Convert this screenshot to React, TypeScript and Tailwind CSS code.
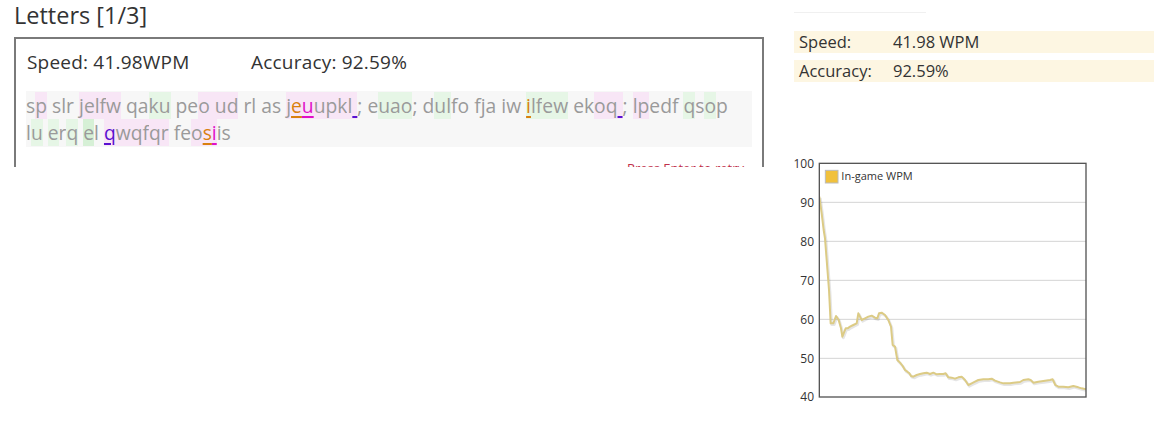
import React from "react";

type Seg = { ch: string; bg: string; err: string };

const BG: Record<string, string> = {
  p: "bg-[#f8e6f6]",
  g: "bg-[#e6f6e6]",
  G: "bg-[#d6f0d6]",
};

const ERR: Record<string, string> = {
  o: "text-[#d9800f] underline decoration-[#d9800f] decoration-2 underline-offset-[3px]",
  m: "text-[#e010c8] underline decoration-[#e010c8] decoration-2 underline-offset-[3px]",
  v: "text-[#5a10d0] underline decoration-[#5a10d0] decoration-2 underline-offset-[3px]",
};

// markup: {x ... } background region, [yc] error char c with colour y
const line1 =
  "s{pp} slr {pjelfw} qa{gku} pe{po ud} rl as {pj[oe][mu]upkl[v ]}; e{guao}; d{gul}fo fja iw {g[oi]lfew} ek{poq[v ]}; {plp}edf {gq}s{go}p";
const line2 = "l{gu} {ge}r{gq} {Ge}l {p[vq]wqfqr} fe{po[os][mi]}is";

function parse(src: string): Seg[] {
  const out: Seg[] = [];
  let bg = "";
  let i = 0;
  while (i < src.length) {
    const c = src[i];
    if (c === "{") {
      bg = BG[src[i + 1]] || "";
      i += 2;
    } else if (c === "}") {
      bg = "";
      i += 1;
    } else if (c === "[") {
      out.push({ ch: src[i + 2], bg, err: ERR[src[i + 1]] || "" });
      i += 4;
    } else {
      out.push({ ch: c, bg, err: "" });
      i += 1;
    }
  }
  return out;
}

function TypedLine({ segs }: { segs: Seg[] }) {
  return (
    <div className="whitespace-pre">
      {segs.map((s, i) => (
        <span key={i} className={`${s.bg} ${s.err}`}>
          {s.ch}
        </span>
      ))}
    </div>
  );
}

const pts: [number, number][] = [
  [118, 140], [125, 190], [131, 240], [135, 265], [140, 330], [147, 420], [152, 520], [160, 520],
  [168, 498], [176, 510], [183, 535], [187, 560], [193, 545], [197, 535], [203, 535], [210, 530],
  [220, 525], [230, 520], [235, 490], [240, 500], [245, 510], [255, 505], [265, 500], [275, 497],
  [285, 503], [292, 505], [297, 490], [305, 488], [315, 495], [325, 510], [333, 530], [338, 585],
  [345, 590], [352, 630], [360, 638], [368, 648], [375, 660], [382, 665], [388, 670], [393, 678],
  [400, 680], [410, 675], [420, 672], [430, 670], [440, 668], [450, 672], [460, 668], [470, 673],
  [480, 672], [490, 672], [497, 670], [505, 682], [515, 683], [525, 686], [535, 682], [545, 680],
  [555, 690], [565, 705], [575, 700], [585, 695], [595, 690], [610, 688], [625, 688], [635, 686],
  [645, 692], [660, 697], [670, 700], [690, 700], [700, 698], [720, 696], [730, 690], [745, 688],
  [752, 690], [760, 698], [775, 695], [790, 693], [810, 690], [818, 688], [826, 705], [835, 710],
  [850, 710], [865, 712], [880, 708], [895, 712], [905, 715], [918, 718],
];

function Chart() {
  const d = pts.map((p, i) => `${i === 0 ? "M" : "L"}${p[0]},${p[1]}`).join(" ");
  const ds = pts.map((p, i) => `${i === 0 ? "M" : "L"}${p[0] + 3},${p[1] + 4}`).join(" ");
  const labels = [
    { v: "100", y: 40 },
    { v: "90", y: 157 },
    { v: "80", y: 274 },
    { v: "70", y: 391 },
    { v: "60", y: 508 },
    { v: "50", y: 625 },
    { v: "40", y: 741 },
  ];
  return (
    <svg width="320" height="260" viewBox="0 0 960 780" className="block">
      <defs>
        <clipPath id="plot">
          <rect x="118" y="40" width="800" height="701" />
        </clipPath>
      </defs>
      {labels.slice(1, 6).map((l) => (
        <line key={l.v} x1="118" x2="918" y1={l.y} y2={l.y} stroke="#d4d4d4" strokeWidth="3" />
      ))}
      {labels.map((l) => (
        <text
          key={l.v}
          x="102"
          y={l.y + 13}
          textAnchor="end"
          fontSize="36"
          fill="#333"
          fontFamily="'Open Sans', 'DejaVu Sans', sans-serif"
        >
          {l.v}
        </text>
      ))}
      <g clipPath="url(#plot)">
        <path d={ds} fill="none" stroke="rgba(0,0,0,0.10)" strokeWidth="8" strokeLinejoin="round" />
        <path d={d} fill="none" stroke="#dccb85" strokeWidth="6" strokeLinejoin="round" />
      </g>
      <rect x="118" y="40" width="800" height="701" fill="none" stroke="#555" strokeWidth="4" />
      <rect x="136" y="61" width="38" height="38" fill="#f1c13c" stroke="#bbb" strokeWidth="3" />
      <text
        x="184"
        y="91"
        fontSize="33"
        fill="#333"
        fontFamily="'Open Sans', 'DejaVu Sans', sans-serif"
      >
        In-game WPM
      </text>
    </svg>
  );
}

export default function App() {
  const s1 = parse(line1);
  const s2 = parse(line2);
  return (
    <div
      className="flex w-[1162px] h-[422px] bg-white text-[#333] overflow-hidden"
      style={{ fontFamily: "'Open Sans', 'Noto Sans', sans-serif" }}
    >
      <div className="w-[766px] h-[167px] overflow-hidden pl-[14px] shrink-0">
        <div className="text-[23.5px] leading-[30px] h-[37px]">Letters [1/3]</div>
        <div className="w-[750px] h-[200px] border-2 border-[#7a7a7a] px-[10px]">
          <div className="flex text-[19px] h-[52px] items-center pl-[1px] pb-[5px] tracking-[0.2px]">
            <span className="w-[224px]">Speed: 41.98WPM</span>
            <span>Accuracy: 92.59%</span>
          </div>
          <div className="bg-[#f7f7f7] text-[#9a9a9a] text-[19.3px] leading-[27px] h-[56px] pt-[1px]">
            <TypedLine segs={s1} />
            <TypedLine segs={s2} />
          </div>
          <div className="flex justify-end pr-[8px] pt-[12px] text-[13px] leading-[18px] text-[#c0304a]">
            Press Enter to retry
          </div>
        </div>
      </div>
      <div className="ml-[14px] flex flex-col">
        <div className="ml-[14px] mt-[12px] w-[132px] border-t border-[#f0f0f0]" />
        <div className="ml-[14px] mt-[18px] w-[360px] flex flex-col gap-[7px] text-[16.5px]">
          <div className="h-[22px] bg-[#fdf6e2] flex items-center pl-[5px]">
            <span className="w-[94px]">Speed:</span>
            <span>41.98 WPM</span>
          </div>
          <div className="h-[22px] bg-[#fdf6e2] flex items-center pl-[5px]">
            <span className="w-[94px]">Accuracy:</span>
            <span>92.59%</span>
          </div>
        </div>
        <div className="mt-[68px]">
          <Chart />
        </div>
      </div>
    </div>
  );
}
